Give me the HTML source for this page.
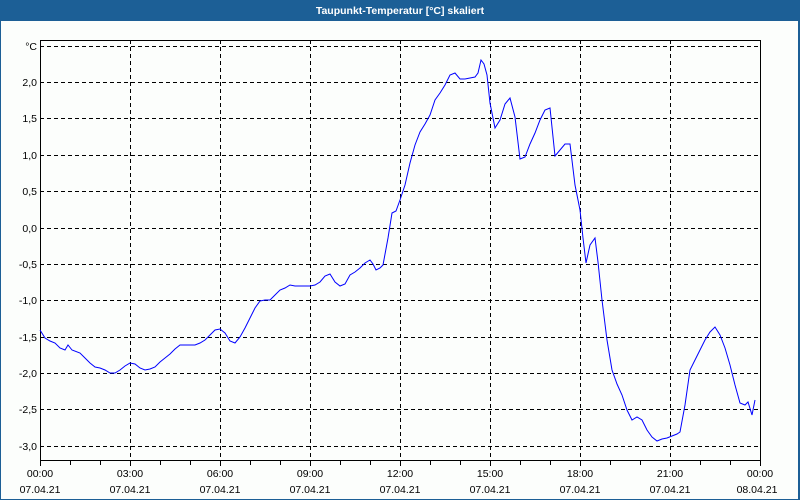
<!DOCTYPE html>
<html><head><meta charset="utf-8"><style>
html,body{margin:0;padding:0;width:800px;height:500px;overflow:hidden;background:#fff}
</style></head><body>
<svg width="800" height="500" xmlns="http://www.w3.org/2000/svg" font-family="Liberation Sans, sans-serif" font-size="10.5">
<rect x="0" y="0" width="800" height="500" fill="#1c5f96"/>
<rect x="1" y="21" width="797" height="478" fill="#fcfefc"/>
<text x="400" y="14" fill="#fff" font-weight="bold" font-size="10.5" text-anchor="middle">Taupunkt-Temperatur [°C] skaliert</text>
<g stroke="#000" stroke-dasharray="4,3" stroke-width="1" fill="none">
<path d="M40 46.5H760M40 82.5H760M40 118.5H760M40 155.5H760M40 191.5H760M40 228.5H760M40 264.5H760M40 300.5H760M40 337.5H760M40 373.5H760M40 409.5H760M40 446.5H760"/>
<path d="M130.5 40V461M220.5 40V461M310.5 40V461M400.5 40V461M490.5 40V461M580.5 40V461M670.5 40V461"/>
</g>
<rect x="40.5" y="40.5" width="720" height="420" fill="none" stroke="#000"/>
<g stroke="#000"><path d="M40.5 461v5M70.5 461v4M100.5 461v4M130.5 461v5M160.5 461v4M190.5 461v4M220.5 461v5M250.5 461v4M280.5 461v4M310.5 461v5M340.5 461v4M370.5 461v4M400.5 461v5M430.5 461v4M460.5 461v4M490.5 461v5M520.5 461v4M550.5 461v4M580.5 461v5M610.5 461v4M640.5 461v4M670.5 461v5M700.5 461v4M730.5 461v4M760.5 461v5"/></g>
<g text-anchor="end" fill="#000">
<text x="37" y="50">°C</text><text x="37" y="86">2,0</text><text x="37" y="122">1,5</text><text x="37" y="159">1,0</text><text x="37" y="195">0,5</text><text x="37" y="232">0,0</text><text x="37" y="268">-0,5</text><text x="37" y="304">-1,0</text><text x="37" y="341">-1,5</text><text x="37" y="377">-2,0</text><text x="37" y="413">-2,5</text><text x="37" y="450">-3,0</text>
</g>
<g text-anchor="middle" fill="#000">
<text x="40" y="477">00:00</text><text x="130" y="477">03:00</text><text x="220" y="477">06:00</text><text x="310" y="477">09:00</text><text x="400" y="477">12:00</text><text x="490" y="477">15:00</text><text x="580" y="477">18:00</text><text x="670" y="477">21:00</text><text x="760" y="477">00:00</text>
<text x="40" y="493">07.04.21</text><text x="130" y="493">07.04.21</text><text x="220" y="493">07.04.21</text><text x="310" y="493">07.04.21</text><text x="400" y="493">07.04.21</text><text x="490" y="493">07.04.21</text><text x="580" y="493">07.04.21</text><text x="670" y="493">07.04.21</text><text x="757" y="493">08.04.21</text>
</g>
<polyline fill="none" stroke="#0000ff" stroke-width="1" points="40,330 45,338 50,341 55,343 60,348 65,350 68,345 72,350 80,353 85,358 90,363 95,367 100,368 105,370 110,373 115,373 120,370 125,366 130,363 135,364 140,368 145,370 150,369 155,367 160,362 165,358 170,354 175,349 180,345 185,345 195,345 200,343 205,340 210,335 215,330 220,329 225,333 230,341 235,343 240,337 245,328 250,318 255,308 260,301 265,300 270,300 275,295 280,290 285,288 290,285 295,286 300,286 310,286 315,285 320,282 325,276 330,274 335,282 340,286 345,284 350,275 355,272 360,268 365,263 370,260 373,264 376,270 380,268 383,265 388,238 392,213 396,211 400,200 405,185 410,163 415,145 420,132 425,124 430,115 435,100 440,93 445,85 450,75 455,73 460,79 465,79 470,78 475,77 478,73 481,60 484,64 487,75 490,103 495,128 500,120 505,104 510,98 515,117 520,159 525,157 530,144 535,133 540,120 545,110 550,108 555,156 560,150 565,144 570,144 575,185 580,210 583,238 586,263 590,245 595,238 598,262 602,300 607,340 612,370 617,384 622,395 627,410 632,420 637,417 642,420 647,430 652,437 657,441 662,439 667,438 672,436 677,434 680,432 685,405 690,370 695,360 700,350 705,340 710,332 715,327 720,335 725,348 730,365 735,385 740,403 745,405 748,402 752,415 755,400"/>
</svg>
</body></html>
